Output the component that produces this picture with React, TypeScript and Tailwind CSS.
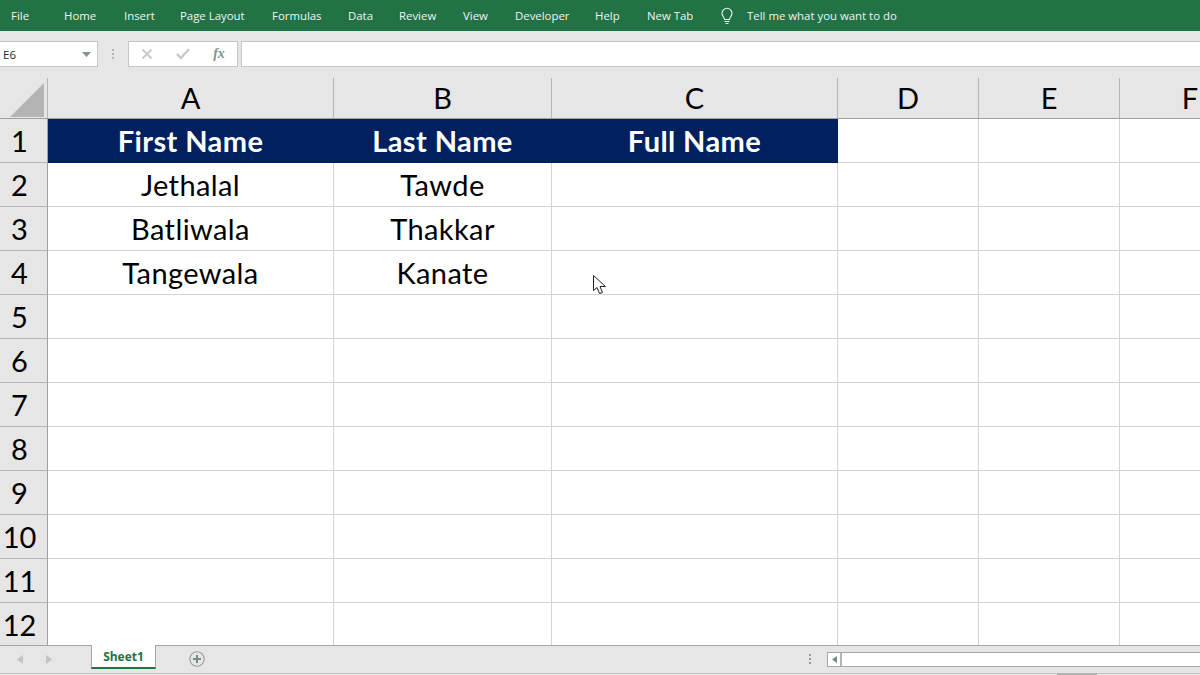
import React from "react";

const tabs: [string, string][] = [
  ["File", "w-[53px]"],
  ["Home", "w-[60px]"],
  ["Insert", "w-[56px]"],
  ["Page Layout", "w-[92px]"],
  ["Formulas", "w-[76px]"],
  ["Data", "w-[51px]"],
  ["Review", "w-[64px]"],
  ["View", "w-[52px]"],
  ["Developer", "w-[80px]"],
  ["Help", "w-[52px]"],
  ["New Tab", "w-[73px]"],
];

const cols: [string, string][] = [
  ["A", "w-[286px]"],
  ["B", "w-[218px]"],
  ["C", "w-[286px]"],
  ["D", "w-[141px]"],
  ["E", "w-[141px]"],
  ["F", "w-[141px]"],
];

const rows: string[][] = [
  ["First Name", "Last Name", "Full Name", "", "", ""],
  ["Jethalal", "Tawde", "", "", "", ""],
  ["Batliwala", "Thakkar", "", "", "", ""],
  ["Tangewala", "Kanate", "", "", "", ""],
  ...Array.from({ length: 8 }, () => ["", "", "", "", "", ""]),
];

export default function App() {
  return (
    <div className="w-[1200px] h-[675px] overflow-hidden bg-[#e6e6e6] flex flex-col font-['Lato','Liberation_Sans',sans-serif] relative">
      {/* Ribbon tabs */}
      <div className="h-[31px] bg-[#217346] flex items-center text-[#f2f2f2] text-[11.4px] font-['Open_Sans',sans-serif] shrink-0 pt-[1px]">
        {tabs.map(([t, w]) => (
          <div key={t} className={`${w} pl-[11px] whitespace-nowrap`}>{t}</div>
        ))}
        <div className="w-[38px] flex pl-[10px]">
          <svg width="16" height="18" viewBox="0 0 16 18" fill="none" stroke="#f2f2f2" strokeWidth="1.1">
            <path d="M5.5 12.5c0-2-2.5-3.2-2.5-6.2a5 5 0 0 1 10 0c0 3-2.500 4.200-2.500 6.200z" />
            <path d="M5.500 14.500h5M6.500 16.500h3" />
          </svg>
        </div>
        <div className="whitespace-nowrap">Tell me what you want to do</div>
      </div>

      {/* Formula bar */}
      <div className="h-[47px] shrink-0 flex pt-[10px] items-start font-['Open_Sans',sans-serif]">
        <div className="w-[98px] h-[26px] bg-white border border-[#c6c6c6] border-l-0 flex items-center justify-between pl-[3px] pr-[6px] pt-[1px] text-[11.5px] text-[#262626]">
          <span>E6</span>
          <svg width="9" height="5" viewBox="0 0 9 5"><path d="M0 0h9L4.500 5z" fill="#7f9486" /></svg>
        </div>
        <div className="w-[30px] h-[26px] flex flex-col items-center justify-center gap-[2px]">
          <div className="w-[2px] h-[2px] bg-[#b4b4b4]" />
          <div className="w-[2px] h-[2px] bg-[#b4b4b4]" />
          <div className="w-[2px] h-[2px] bg-[#b4b4b4]" />
        </div>
        <div className="w-[110px] h-[26px] bg-white border border-[#c6c6c6] flex items-center">
          <div className="w-[36px] flex justify-center">
            <svg width="12" height="12" viewBox="0 0 12 12" stroke="#c8c8c8" strokeWidth="1.800"><path d="M1.500 1.500l9 9M10.500 1.500l-9 9" /></svg>
          </div>
          <div className="w-[36px] flex justify-center">
            <svg width="14" height="12" viewBox="0 0 14 12" fill="none" stroke="#c8c8c8" strokeWidth="2.400"><path d="M1 6l4 4 8-9" /></svg>
          </div>
          <div className="w-[36px] flex justify-center text-[#7f9486] text-[14px] font-bold italic font-['Liberation_Serif',serif] leading-none pb-[1px]">
            fx
          </div>
        </div>
        <div className="w-[3px]" />
        <div className="flex-1 h-[26px] bg-white border border-[#c6c6c6] border-r-0" />
      </div>

      {/* Sheet */}
      <div className="h-[568px] shrink-0 bg-white overflow-hidden border-b border-[#a6a6a6]">
        {/* Column header row */}
        <div className="flex h-[41px] border-b border-[#9f9f9f] bg-[#e6e6e6]">
          <div className="w-[48px] shrink-0 border-r border-[#b5b5b5] flex items-end justify-end pr-[3px] pb-[1px]">
            <svg width="34" height="34" viewBox="0 0 34 34"><path d="M34 0v34H0z" fill="#b4b4b4" /></svg>
          </div>
          {cols.map(([c, w]) => (
            <div key={c} className={`${w} shrink-0 border-r border-[#b5b5b5] flex items-center justify-center text-[29px] text-black leading-none pb-[2px]`}>
              {c}
            </div>
          ))}
        </div>
        {rows.map((r, i) => (
          <div key={i} className="flex h-[44px]">
            <div className="w-[48px] shrink-0 bg-[#e6e6e6] border-r border-b border-r-[#9f9f9f] border-b-[#b5b5b5] flex items-center justify-center pr-[8px] text-[29px] text-black leading-none">
              {i + 1}
            </div>
            {cols.map(([c, w], j) => {
              const head = i === 0 && j < 3;
              return (
                <div
                  key={c}
                  className={`${w} shrink-0 border-r border-b flex items-center justify-center text-[29px] leading-none tracking-[0.4px] ${
                    head
                      ? "bg-[#002060] border-[#002060] text-white font-bold"
                      : "border-[#d4d4d4] text-black"
                  }`}
                >
                  {r[j]}
                </div>
              );
            })}
          </div>
        ))}
      </div>

      {/* Sheet tabs */}
      <div className="h-[28px] shrink-0 flex items-start border-b border-[#c6c6c6] font-['Open_Sans',sans-serif] relative">
        <div className="w-[91px] h-[27px] flex items-center pl-[17px] gap-[22px]">
          <svg width="7" height="9" viewBox="0 0 7 9"><path d="M6 0v9L0 4.500z" fill="#c3c3c3" /></svg>
          <svg width="7" height="9" viewBox="0 0 7 9"><path d="M0 0v9l6-4.500z" fill="#c3c3c3" /></svg>
        </div>
        <div className="w-[65px] h-[24px] -mt-[1px] pt-[2px] bg-white border-x border-[#a6a6a6] border-b-2 border-b-[#217346] flex items-center justify-center text-[12px] font-bold text-[#217346]">
          Sheet1
        </div>
        <div className="ml-[33px] mt-[5px]">
          <svg width="16" height="16" viewBox="0 0 16 16" fill="none">
            <circle cx="8" cy="8" r="7.200" stroke="#9a9a9a" strokeWidth="1.100" />
            <path d="M8 4v8M4 8h8" stroke="#6f8f7c" strokeWidth="2" />
          </svg>
        </div>
        <div className="ml-[604px] mt-[8px] flex flex-col gap-[2px]">
          <div className="w-[2px] h-[2px] bg-[#9a9a9a]" />
          <div className="w-[2px] h-[2px] bg-[#9a9a9a]" />
          <div className="w-[2px] h-[2px] bg-[#9a9a9a]" />
        </div>
        <div className="ml-[16px] mt-[6px] flex-1 h-[15px] bg-white border border-r-0 border-[#a6a6a6] flex">
          <div className="w-[14px] border-r-2 border-[#b4b4b4] flex items-center justify-center">
            <svg width="5" height="7" viewBox="0 0 5 7"><path d="M5 0v7L0 3.500z" fill="#6f8f7c" /></svg>
          </div>
        </div>
      </div>

      <div className="absolute left-[1057px] top-[673px] w-[40px] h-[2px] bg-[#b4b4b4]" />

      {/* Cursor */}
      <svg className="absolute left-[593px] top-[275px]" width="14" height="20" viewBox="0 0 14 20">
        <path d="M0.500 0.500V15.500L4 12.500L6.500 18.500L9.500 17.500L7 11.500H12.500Z" fill="white" stroke="#222" strokeWidth="1" />
      </svg>
    </div>
  );
}
